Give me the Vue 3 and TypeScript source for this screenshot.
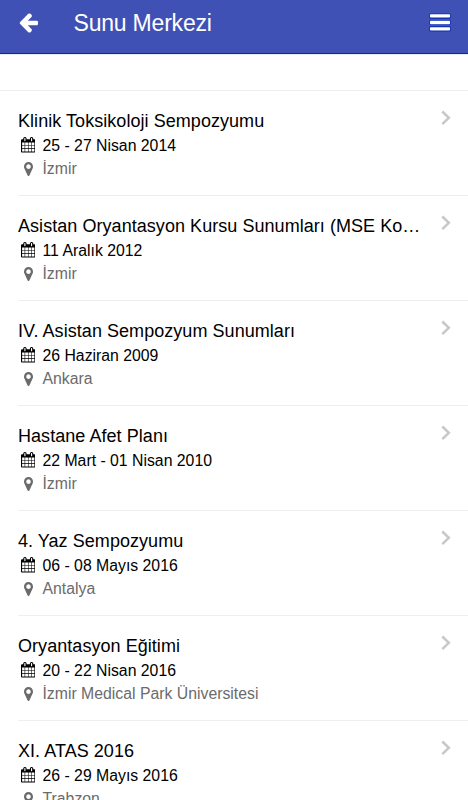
<script setup lang="ts">
interface Meeting {
  title: string
  date: string
  place: string
}

const meetings: Meeting[] = [
  { title: 'Klinik Toksikoloji Sempozyumu', date: '25 - 27 Nisan 2014', place: 'İzmir' },
  { title: 'Asistan Oryantasyon Kursu Sunumları (MSE Konferansları)', date: '11 Aralık 2012', place: 'İzmir' },
  { title: 'IV. Asistan Sempozyum Sunumları', date: '26 Haziran 2009', place: 'Ankara' },
  { title: 'Hastane Afet Planı', date: '22 Mart - 01 Nisan 2010', place: 'İzmir' },
  { title: '4. Yaz Sempozyumu', date: '06 - 08 Mayıs 2016', place: 'Antalya' },
  { title: 'Oryantasyon Eğitimi', date: '20 - 22 Nisan 2016', place: 'İzmir Medical Park Üniversitesi' },
  { title: 'XI. ATAS 2016', date: '26 - 29 Mayıs 2016', place: 'Trabzon' },
]
</script>

<template>
  <div class="app">
    <header class="bar">
      <svg class="back" viewBox="133 150 1531 1620" preserveAspectRatio="none">
        <path d="M1664 896v128q0 53-32.5 90.5t-84.5 37.5h-704l293 294q38 36 38 90t-38 90l-75 76q-37 37-90 37-52 0-91-37l-651-652q-37-37-37-90 0-52 37-91l651-650q38-38 91-38 52 0 90 38l75 74q38 38 38 91t-38 91l-293 293h704q52 0 84.5 37.5t32.5 90.5z" />
      </svg>
      <h1>Sunu Merkezi</h1>
      <svg class="menu" viewBox="0 0 22 20">
        <g class="edge"><rect x="0.4" y="0.5" width="21.2" height="5.2" rx="1.3" /><rect x="0.4" y="7" width="21.2" height="5" rx="1.3" /><rect x="0.4" y="13.2" width="21.2" height="5.3" rx="1.3" /></g>
        <rect x="1" y="1.2" width="20" height="3.4" rx="0.8" /><rect x="1" y="7.8" width="20" height="3.4" rx="0.8" /><rect x="1" y="14.2" width="20" height="3.4" rx="0.8" />
      </svg>
    </header>
    <div class="spacer"></div>
    <ul class="list">
      <li v-for="m in meetings" :key="m.title" class="row">
        <div class="body">
          <h2>{{ m.title }}</h2>
          <p class="line date">
            <svg class="calendar" viewBox="64 0 1664 1792" preserveAspectRatio="none">
              <path d="M192 1664h288v-288h-288v288zm352 0h320v-288h-320v288zm-352-352h288v-320h-288v320zm352 0h320v-320h-320v320zm-352-384h288v-288h-288v288zm736 736h320v-288h-320v288zm-384-736h320v-288h-320v288zm768 736h288v-288h-288v288zm-384-352h320v-320h-320v320zm-352-864v-288q0-13-9.500-22.500t-22.500-9.500h-64q-13 0-22.500 9.500t-9.500 22.500v288q0 13 9.500 22.500t22.500 9.500h64q13 0 22.500-9.500t9.500-22.500zm736 864h288v-320h-288v320zm-384-384h320v-288h-320v288zm384 0h288v-288h-288v288zm32-480v-288q0-13-9.500-22.500t-22.500-9.500h-64q-13 0-22.500 9.500t-9.500 22.500v288q0 13 9.500 22.500t22.500 9.500h64q13 0 22.500-9.500t9.500-22.500zm384-64v1280q0 52-38 90t-90 38h-1408q-52 0-90-38t-38-90v-1280q0-52 38-90t90-38h128v-96q0-66 47-113t113-47h64q66 0 113 47t47 113v96h384v-96q0-66 47-113t113-47h64q66 0 113 47t47 113v96h128q52 0 90 38t38 90z" />
            </svg>
            <span>{{ m.date }}</span>
          </p>
          <p class="line place">
            <svg class="pin" viewBox="384 128 1024 1536" preserveAspectRatio="none">
              <path d="M1152 640q0-106-75-181t-181-75-181 75-75 181 75 181 181 75 181-75 75-181zm256 0q0 109-33 179l-364 774q-16 33-47.500 52t-67.500 19-67.500-19-46.500-52l-365-774q-33-70-33-179 0-212 150-362t362-150 362 150 150 362z" />
            </svg>
            <span>{{ m.place }}</span>
          </p>
        </div>
        <svg class="chevron" viewBox="0 0 10 16"><path d="M1.300 1.500 7.800 7.800 1.300 14.100" /></svg>
      </li>
    </ul>
  </div>
</template>

<style>
body {
  overflow: hidden;
}
</style>

<style scoped>
.app {
  height: 800px;
  overflow: hidden;
  background: #fff;
  color: #000;
  font-family: "Liberation Sans", Arial, sans-serif;
}
.bar {
  box-sizing: border-box;
  height: 54px;
  display: flex;
  align-items: flex-start;
  padding: 0 17px 0 19px;
  background: #3f51b5;
  border-bottom: 1px solid #0a28a6;
  color: #fff;
}
.back {
  width: 19px;
  height: 20px;
  margin-top: 13px;
  fill: #fff;
}
h1 {
  flex: 1;
  margin: 0 0 0 35.500px;
  font-size: 23px;
  font-weight: 400;
  line-height: 46px;
  letter-spacing: -0.200px;
}
.menu {
  width: 22px;
  height: 20px;
  margin-top: 13px;
  fill: #fff;
}
.edge {
  fill: #0a2eb0;
}
.spacer {
  box-sizing: border-box;
  height: 37px;
  border-top: 1px solid #e8eaf7;
  border-bottom: 1px solid #eee;
}
.list {
  margin: 0;
  padding: 0 0 0 18px;
  list-style: none;
}
.row {
  box-sizing: border-box;
  height: 105px;
  display: flex;
  align-items: flex-start;
  padding: 18px 17.500px 0 0;
  border-bottom: 1px solid #eee;
}
.body {
  flex: 1;
  min-width: 0;
  padding-right: 18.500px;
}
h2 {
  margin: 0;
  overflow: hidden;
  white-space: nowrap;
  text-overflow: ellipsis;
  font-size: 18px;
  font-weight: 400;
  line-height: 24px;
  letter-spacing: 0.050px;
}
.line {
  display: flex;
  align-items: center;
  height: 24px;
  margin: 0;
  font-size: 15.800px;
  line-height: 24px;
}
.place {
  color: #6b6b6b;
}
.date span {
  padding-top: 1px;
}
.calendar {
  width: 14.500px;
  height: 15.500px;
  margin: 0 7.300px 0 2.700px;
}
.pin {
  width: 9px;
  height: 14px;
  margin: 0 9.700px 0 5.800px;
  fill: #6b6b6b;
}
.chevron {
  width: 10px;
  height: 16px;
  margin-top: 1px;
  fill: none;
  stroke: #c7c7cc;
  stroke-width: 2.500;
}
</style>
